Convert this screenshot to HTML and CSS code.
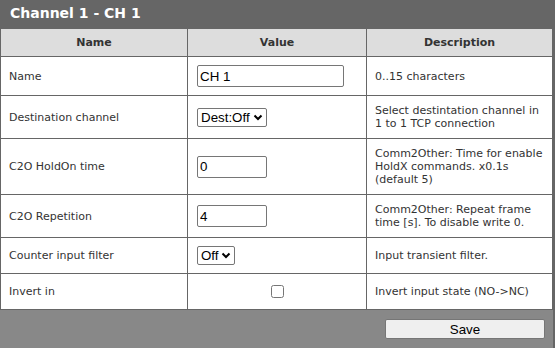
FILE: index.html
```html
<!DOCTYPE html>
<html lang="en">
<head>
  <meta charset="UTF-8" />
  <title>Channel 1 - CH 1</title>
  <link rel="stylesheet" href="styles.css">
</head>
<body>
  <div class="panel">
    <h1 class="panel-title">Channel 1 - CH 1</h1>

    <table class="settings">
      <thead>
        <tr>
          <th class="col-name">Name</th>
          <th class="col-value">Value</th>
          <th>Description</th>
        </tr>
      </thead>
      <tbody>
        <tr>
          <td>Name</td>
          <td><input type="text" class="txt-long" value="CH 1" /></td>
          <td>0..15 characters</td>
        </tr>
        <tr>
          <td>Destination channel</td>
          <td>
            <select class="sel-dest">
              <option>Dest:Off</option>
              <option>Dest:CH 2</option>
            </select>
          </td>
          <td>Select destintation channel in 1 to 1 TCP connection</td>
        </tr>
        <tr>
          <td>C2O HoldOn time</td>
          <td><input type="text" class="txt-short" value="0" /></td>
          <td>Comm2Other: Time for enable HoldX commands. x0.1s (default 5)</td>
        </tr>
        <tr>
          <td>C2O Repetition</td>
          <td><input type="text" class="txt-short" value="4" /></td>
          <td>Comm2Other: Repeat frame time [s]. To disable write 0.</td>
        </tr>
        <tr>
          <td>Counter input filter</td>
          <td>
            <select class="sel-off">
              <option>Off</option>
              <option>On</option>
            </select>
          </td>
          <td>Input transient filter.</td>
        </tr>
        <tr>
          <td>Invert in</td>
          <td class="center"><input type="checkbox" /></td>
          <td>Invert input state (NO-&gt;NC)</td>
        </tr>
      </tbody>
    </table>

    <div class="panel-footer">
      <button class="save-btn">Save</button>
    </div>
  </div>
</body>
</html>
```

FILE: styles.css
```css
* {
  box-sizing: border-box;
}
body {
  margin: 0;
  font-family: "DejaVu Sans", Verdana, sans-serif;
  background: #fff;
  color: #333;
}

/* Panel */
.panel {
  width: 555px;
  background: #666;
  padding: 0 2px 1px 0;
}

.panel-title {
  margin: 0;
  height: 28px;
  padding: 5px 0 0 10px;
  font-size: 14px;
  font-weight: bold;
  color: #fff;
}

/* Table */
.settings {
  width: 553px;
  border-collapse: collapse;
  background: #fff;
  font-size: 11px;
  line-height: 13px;
}

.settings th,
.settings td {
  border: 1px solid #666;
  padding: 8px;
  text-align: left;
  vertical-align: middle;
}

.settings th {
  background: #ddd;
  text-align: center;
  font-weight: bold;
  color: #333;
  padding: 7px 8px;
}

.col-name {
  width: 187px;
}
.col-value {
  width: 179px;
}

.settings td.center {
  text-align: center;
}

.settings input[type="text"],
.settings select {
  font-family: "Liberation Sans", Arial, sans-serif;
  font-size: 13.33px;
  color: #000;
  margin: 0 0 0 1px;
}

.settings input[type="text"] {
  height: 22px;
  border: 1px solid #767676;
  border-radius: 2px;
  padding: 1px 2px;
}

.txt-long {
  width: 147px;
}
.txt-short {
  width: 70px;
}

/* selects with a small chevron, like the Windows look */
.settings select {
  -webkit-appearance: none;
  appearance: none;
  height: 19px;
  padding: 0 14px 0 3px;
  border: 1px solid #767676;
  border-radius: 2px;
  background: #fff url("data:image/svg+xml,%3Csvg xmlns='http://www.w3.org/2000/svg' width='10' height='7' viewBox='0 0 10 7'%3E%3Cpath d='M1.5 1.5 5 5l3.5-3.5' fill='none' stroke='%23000' stroke-width='2'/%3E%3C/svg%3E") no-repeat right 3px center;
}
.sel-dest {
  width: 70px;
}
.sel-off {
  width: 38px;
}

.settings input[type="checkbox"] {
  margin: 3px 3px 3px 4px;
}

/* Footer */
.panel-footer {
  background: #888;
  height: 38px;
  display: flex;
  justify-content: flex-end;
  align-items: center;
  padding-right: 8px;
}

.save-btn {
  width: 160px;
  height: 20px;
  font-family: "Liberation Sans", Arial, sans-serif;
  font-size: 13.33px;
  color: #000;
  background: #efefef;
  border: 1px solid #767676;
  border-radius: 2px;
}
```
